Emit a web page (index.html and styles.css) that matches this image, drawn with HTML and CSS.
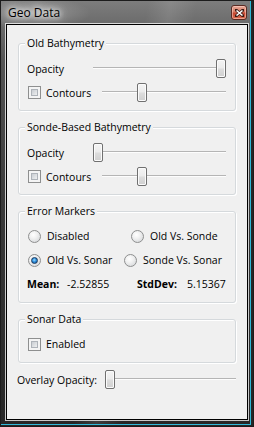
FILE: index.html
```html
<!DOCTYPE html>
<html>
<head>
<meta charset="utf-8">
<link rel="stylesheet" href="styles.css">
</head>
<body>
<div class="window">
  <div class="titlebar">
    <span class="title">Geo Data</span>
    <div class="close">
      <svg width="9" height="8" viewBox="0 0 9 8"><path d="M1 1 L8 7 M8 1 L1 7" stroke="#3b1a14" stroke-width="3" stroke-linecap="square"/><path d="M1.5 1.5 L7.5 6.5 M7.5 1.5 L1.5 6.5" stroke="#fff" stroke-width="1.6"/></svg>
    </div>
  </div>
  <div class="client">
    <section class="group">
      <div class="legend">Old Bathymetry</div>
      <div class="row">
        <span class="lbl lbl-op">Opacity</span>
        <div class="slider"><div class="handle" style="--v:1"></div></div>
      </div>
      <div class="row">
        <span class="cb"></span>
        <span class="lbl lbl-ct">Contours</span>
        <div class="slider"><div class="handle" style="--v:0.307"></div></div>
      </div>
    </section>
    <section class="group">
      <div class="legend">Sonde-Based Bathymetry</div>
      <div class="row">
        <span class="lbl lbl-op">Opacity</span>
        <div class="slider"><div class="handle" style="--v:0"></div></div>
      </div>
      <div class="row">
        <span class="cb"></span>
        <span class="lbl lbl-ct">Contours</span>
        <div class="slider"><div class="handle" style="--v:0.307"></div></div>
      </div>
    </section>
    <section class="group g-opts">
      <div class="legend">Error Markers</div>
      <div class="rrow">
        <div class="ropt ropt-a"><span class="rb"></span><span>Disabled</span></div>
        <div class="ropt"><span class="rb"></span><span>Old Vs. Sonde</span></div>
      </div>
      <div class="rrow">
        <div class="ropt ropt-b"><span class="rb on"></span><span>Old Vs. Sonar</span></div>
        <div class="ropt"><span class="rb"></span><span>Sonde Vs. Sonar</span></div>
      </div>
      <div class="rrow stats">
        <b>Mean:</b><span>-2.52855</span><b>StdDev:</b><span>5.15367</span>
      </div>
    </section>
    <section class="group g-opts">
      <div class="legend">Sonar Data</div>
      <div class="rrow">
        <span class="cb"></span>
        <span class="lbl lbl-en">Enabled</span>
      </div>
    </section>
    <div class="overlay">
      <span class="lbl lbl-ov">Overlay Opacity:</span>
      <div class="slider"><div class="handle" style="--v:0"></div></div>
    </div>
  </div>
</div>
</body>
</html>
```
FILE: styles.css
```css
html, body {
  margin: 0;
  padding: 0;
  background: #2a2a2a;
}
body {
  font-family: "Open Sans", "Noto Sans", sans-serif;
  font-size: 10.5px;
  color: #000;
}
.window {
  box-sizing: border-box;
  width: 254px;
  height: 427px;
  display: flex;
  flex-direction: column;
  padding: 0 4px 5px 4px;
  border: 1px solid #1c1c1c;
  background:
    radial-gradient(ellipse 60px 16px at 30px 12px, rgba(255,255,255,0.28), rgba(255,255,255,0) 100%),
    linear-gradient(100deg, rgba(255,255,255,0) 45%, rgba(255,255,255,0.10) 52%, rgba(255,255,255,0) 60%),
    linear-gradient(#7d7d7d 0, #6c6c6c 22px, #555 60px, #3a3a3a 200px, #262626 100%);
  box-shadow: inset -2px -1px 0 #262626, inset -3px -2px 0 #2fb8d8;
}
.titlebar {
  height: 22px;
  display: flex;
  align-items: flex-start;
  padding-left: 3px;
}
.title {
  font-size: 12px;
  line-height: 14px;
  margin-top: 5px;
  flex: 1;
  text-shadow: 0 0 5px #fff, 0 0 9px rgba(255,255,255,0.9), 0 0 12px rgba(255,255,255,0.7);
}
.close {
  box-sizing: border-box;
  width: 16px;
  height: 15px;
  margin-top: 4px;
  margin-right: 2px;
  border: 1px solid #5a2a22;
  border-radius: 3px;
  background: linear-gradient(#e9a897 0, #d77a64 45%, #c5462f 55%, #d86a4e 100%);
  box-shadow: inset 0 0 0 1px rgba(255,220,210,0.5);
  display: flex;
  align-items: center;
  justify-content: center;
}
.close svg { display: block; }
.client {
  flex: 1;
  margin: 1px;
  border: 1px solid #000;
  box-shadow: 0 0 0 1px rgba(255,255,255,0.75);
  background: #f0f0f0;
  padding: 18px 11px 0 10px;
  display: flex;
  flex-direction: column;
}
.group {
  margin-left: 1px;
  border: 1px solid #d5d9dc;
  border-radius: 3px;
  box-shadow: inset 1px 1px 0 #fff, 1px 1px 0 #fff;
  padding: 0 9px 8px 8px;
  display: flex;
  flex-direction: column;
  gap: 5px;
}
.group + .group { margin-top: 16px; }
.legend {
  align-self: flex-start;
  margin: -8px 0 4px -2px;
  padding: 0 2px;
  line-height: 14px;
  background: #f0f0f0;
}
.g-opts .legend { margin-bottom: 3px; }
.row {
  height: 19px;
  display: flex;
  align-items: center;
}
.lbl { flex: none; }
.lbl-op { width: 66px; }
.lbl-ct { width: 56px; margin-left: 5px; }
.lbl-en { margin-left: 5px; }
.lbl-ov { width: 88px; }
.slider {
  flex: 1;
  height: 19px;
  position: relative;
  display: flex;
  align-items: center;
}
.slider::before {
  content: "";
  position: absolute;
  left: 0;
  right: 0;
  top: 8px;
  height: 1px;
  background: #b5b5b5;
  box-shadow: 0 1px 0 #fdfdfd;
}
.handle {
  position: relative;
  box-sizing: border-box;
  width: 10px;
  height: 19px;
  margin-left: calc((100% - 10px) * var(--v));
  border: 1px solid #707070;
  border-radius: 2px;
  background: linear-gradient(#f4f4f4 0, #ececec 45%, #dcdcdc 55%, #d0d0d0 100%);
  box-shadow: inset 0 0 0 1px #fbfbfb;
}
.cb {
  flex: none;
  box-sizing: border-box;
  width: 13px;
  height: 13px;
  margin-left: 1px;
  border: 1px solid #8e8f8f;
  background: #f4f4f4;
  padding: 2px;
}
.cb::before {
  content: "";
  display: block;
  box-sizing: border-box;
  width: 7px;
  height: 7px;
  border: 1px solid #aeb3b9;
  background: linear-gradient(135deg, #c9cdd2, #eeeff0);
}
.rrow {
  height: 20px;
  display: flex;
  align-items: center;
}
.group .rrow + .rrow { margin-top: -1px; }
.ropt {
  display: flex;
  align-items: center;
  gap: 6px;
}
.ropt-a { width: 103px; }
.ropt-b { width: 96px; }
.rb {
  flex: none;
  box-sizing: border-box;
  width: 13px;
  height: 13px;
  margin-left: 1px;
  border-radius: 50%;
  border: 1px solid #8e8f8f;
  background: radial-gradient(circle at 40% 35%, #ffffff 0, #f2f2f2 35%, #cfd2d5 100%);
  display: flex;
  align-items: center;
  justify-content: center;
}
.rb.on::after {
  content: "";
  box-sizing: border-box;
  width: 7px;
  height: 7px;
  border-radius: 50%;
  border: 1px solid #1b3a5e;
  background: radial-gradient(circle at 45% 40%, #9fe0ff 0, #2f8fdc 45%, #0d4e94 100%);
}
.stats {
  display: grid;
  grid-template-columns: 40px 70px 50px auto;
  align-items: center;
}
.stats b { font-weight: 700; }
.overlay {
  margin-top: 7px;
  height: 19px;
  display: flex;
  align-items: center;
}
```
